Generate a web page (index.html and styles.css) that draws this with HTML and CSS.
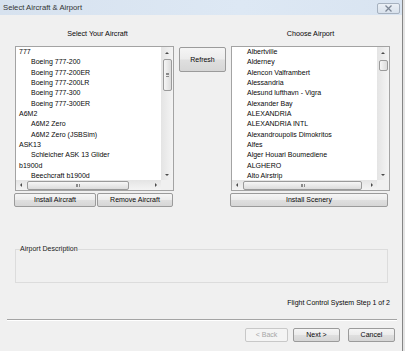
FILE: index.html
```html
<!DOCTYPE html>
<html>
<head>
	<link rel="stylesheet" href="styles.css">
</head>
<body>
<div class="window">
	<div class="titlebar">
		<span class="title">Select Aircraft &amp; Airport</span>
		<span class="close">
			<svg width="9" height="7" viewBox="0 0 9 7"><path d="M1.5 0.5 L7.5 6.5 M7.5 0.5 L1.5 6.5" stroke="#7d8796" stroke-width="1.3" fill="none"/></svg>
		</span>
	</div>

	<div class="main">
		<div class="columns">
			<div class="col">
				<div class="col-head left">Select Your Aircraft</div>
				<div class="listbox">
					<div class="items aircraft">
						<div class="item">777</div>
						<div class="item sub">Boeing 777-200</div>
						<div class="item sub">Boeing 777-200ER</div>
						<div class="item sub">Boeing 777-200LR</div>
						<div class="item sub">Boeing 777-300</div>
						<div class="item sub">Boeing 777-300ER</div>
						<div class="item">A6M2</div>
						<div class="item sub">A6M2 Zero</div>
						<div class="item sub">A6M2 Zero (JSBSim)</div>
						<div class="item">ASK13</div>
						<div class="item sub">Schleicher ASK 13 Glider</div>
						<div class="item">b1900d</div>
						<div class="item sub">Beechcraft b1900d</div>
					</div>
					<div class="vscroll">
						<span class="arrow"><span class="tri-up"></span></span>
						<span class="vthumb big"><span class="grip-h"></span></span>
						<span class="fill"></span>
						<span class="arrow"><span class="tri-down"></span></span>
					</div>
					<div class="hscroll">
						<span class="harrow"><span class="tri-left"></span></span>
						<span class="hthumb air"><span class="grip-v"></span></span>
						<span class="fill"></span>
						<span class="harrow"><span class="tri-right"></span></span>
					</div>
					<div class="corner"></div>
				</div>
				<div class="btn-row">
					<button class="btn install">Install Aircraft</button>
					<button class="btn remove">Remove Aircraft</button>
				</div>
			</div>

			<div class="mid">
				<button class="btn refresh">Refresh</button>
			</div>

			<div class="col">
				<div class="col-head">Choose Airport</div>
				<div class="listbox">
					<div class="items airports">
						<div class="item">Albertville</div>
						<div class="item">Alderney</div>
						<div class="item">Alencon Valframbert</div>
						<div class="item">Alessandria</div>
						<div class="item">Alesund lufthavn - Vigra</div>
						<div class="item">Alexander Bay</div>
						<div class="item">ALEXANDRIA</div>
						<div class="item">ALEXANDRIA INTL</div>
						<div class="item">Alexandroupolis Dimokritos</div>
						<div class="item">Alfes</div>
						<div class="item">Alger Houari Boumediene</div>
						<div class="item">ALGHERO</div>
						<div class="item">Alto Airstrip</div>
					</div>
					<div class="vscroll">
						<span class="arrow"><span class="tri-up"></span></span>
						<span class="vthumb small"></span>
						<span class="fill"></span>
						<span class="arrow"><span class="tri-down"></span></span>
					</div>
					<div class="hscroll">
						<span class="harrow"><span class="tri-left"></span></span>
						<span class="hthumb apt"><span class="grip-v"></span></span>
						<span class="fill"></span>
						<span class="harrow"><span class="tri-right"></span></span>
					</div>
					<div class="corner"></div>
				</div>
				<div class="btn-row">
					<button class="btn scenery">Install Scenery</button>
				</div>
			</div>
		</div>

		<fieldset class="desc">
			<legend>Airport Description</legend>
			<div class="desc-body"></div>
		</fieldset>

		<div class="status">Flight Control System Step 1 of 2</div>
		<div class="sep"></div>

		<div class="footer">
			<button class="btn back" disabled>&lt; Back</button>
			<button class="btn next">Next &gt;</button>
			<button class="btn cancel">Cancel</button>
		</div>
	</div>
</div>
</body>
</html>
```

FILE: styles.css
```css
body {
	margin: 0;
	background: #e4e4e4;
	font-family: "Liberation Sans", Arial, sans-serif;
	font-size: 7px;
	color: #080808;
}

.window {
	width: 402px;
	height: 351px;
	border-right: 1px solid #858585;
	background: #f0f0f0;
}

.titlebar {
	height: 15px;
	display: flex;
	align-items: flex-start;
	justify-content: space-between;
	padding: 0 2px 0 3px;
	background: linear-gradient(to right, #d7e2ef, #dde8f4 60%, #d9e4f1);
}

.title {
	font-size: 7.7px;
	line-height: 16px;
	color: #333;
}

.close {
	margin-top: 3px;
	width: 21px;
	height: 9px;
	border: 1px solid #a6b1bf;
	border-radius: 2px;
	background: linear-gradient(#ebf0f6, #d8e1ec);
	display: flex;
	align-items: center;
	justify-content: center;
}

.main {
	padding: 0 12px 0 15px;
}

.columns {
	display: flex;
	gap: 5px;
}

.col {
	width: 159px;
}

.col-head {
	padding-top: 13px;
	height: 12px;
	line-height: 12px;
	margin-bottom: 6px;
	text-align: center;
	font-size: 7.2px;
}

.col-head.left {
	padding-left: 6px;
}

.listbox {
	box-sizing: border-box;
	height: 145px;
	border: 1px solid #a3a3a3;
	background: #fff;
	display: grid;
	grid-template-columns: 1fr 12px;
	grid-template-rows: 1fr 10px;
}

.items {
	overflow: hidden;
	line-height: 10.35px;
	white-space: nowrap;
}

.aircraft {
	padding-left: 3px;
}

.aircraft .sub {
	padding-left: 12px;
}

.airports {
	padding-left: 15px;
}

.vscroll {
	display: flex;
	flex-direction: column;
	align-items: center;
	background: linear-gradient(to right, #e4e4e4, #f4f4f4);
}

.arrow {
	height: 11px;
	display: flex;
	align-items: center;
	justify-content: center;
}

.fill {
	flex: 1;
}

.tri-up, .tri-down, .tri-left, .tri-right {
	width: 0;
	height: 0;
}

.tri-up {
	border-left: 2px solid transparent;
	border-right: 2px solid transparent;
	border-bottom: 2px solid #4b4b4b;
}

.tri-down {
	border-left: 2px solid transparent;
	border-right: 2px solid transparent;
	border-top: 2px solid #4b4b4b;
}

.tri-left {
	border-top: 2px solid transparent;
	border-bottom: 2px solid transparent;
	border-right: 2px solid #4b4b4b;
}

.tri-right {
	border-top: 2px solid transparent;
	border-bottom: 2px solid transparent;
	border-left: 2px solid #4b4b4b;
}

.vthumb {
	box-sizing: border-box;
	width: 9px;
	border: 1px solid #9a9a9a;
	border-radius: 2px;
	background: linear-gradient(to right, #f6f6f6, #dcdcdc);
	display: flex;
	align-items: center;
	justify-content: center;
}

.vthumb.big {
	margin-top: 1px;
	height: 32px;
}

.vthumb.small {
	margin-top: 2px;
	height: 11px;
}

.grip-h {
	width: 3px;
	height: 4px;
	background: repeating-linear-gradient(#8a8a8a 0 1px, transparent 1px 1.5px);
}

.hscroll {
	display: flex;
	align-items: center;
	background: linear-gradient(#e4e4e4, #f4f4f4);
}

.harrow {
	width: 10px;
	height: 10px;
	display: flex;
	align-items: center;
	justify-content: center;
}

.hthumb {
	box-sizing: border-box;
	height: 9px;
	margin-left: 1px;
	border: 1px solid #9a9a9a;
	border-radius: 2px;
	background: linear-gradient(#f6f6f6, #dcdcdc);
	display: flex;
	align-items: center;
	justify-content: center;
}

.hthumb.air {
	width: 102px;
}

.hthumb.apt {
	width: 119px;
}

.grip-v {
	width: 4px;
	height: 3px;
	background: repeating-linear-gradient(to right, #8a8a8a 0 1px, transparent 1px 1.5px);
}

.corner {
	background: #f0f0f0;
}

.btn {
	box-sizing: border-box;
	height: 14px;
	padding: 0;
	border: 1px solid #9b9b9b;
	border-radius: 2px;
	background: linear-gradient(#f5f5f5 0%, #ececec 48%, #dfdfdf 52%, #d6d6d6 100%);
	font-family: inherit;
	font-size: 7px;
	line-height: 12px;
	color: #080808;
}

.btn-row {
	display: flex;
	gap: 1px;
	margin: 2px 0 0 -1px;
}

.install {
	width: 82px;
}

.remove {
	width: 76px;
}

.scenery {
	width: 158px;
}

.mid {
	padding-top: 32px;
}

.refresh {
	width: 47px;
	height: 25px;
}

.desc {
	margin: 37px 2px 0 0;
	padding: 0 4px;
	border: 1px solid #dcdcdc;
	min-inline-size: 0;
}

.desc legend {
	padding: 0;
	line-height: 10px;
	color: #1a1a1a;
}

.desc-body {
	height: 28px;
}

.status {
	margin-top: 15px;
	line-height: 10px;
	text-align: right;
}

.sep {
	margin: 11px -7px 0 -8px;
	border-top: 1px solid #a4a4a4;
	border-bottom: 1px solid #fff;
}

.footer {
	display: flex;
	justify-content: flex-end;
	margin: 7px -5px 0 0;
}

.back {
	width: 43px;
	margin-right: 5px;
	color: #a6a6a6;
	border-color: #c8c8c8;
	background: #f4f4f4;
}

.next {
	width: 47px;
	margin-right: 8px;
}

.cancel {
	width: 47px;
}
```
